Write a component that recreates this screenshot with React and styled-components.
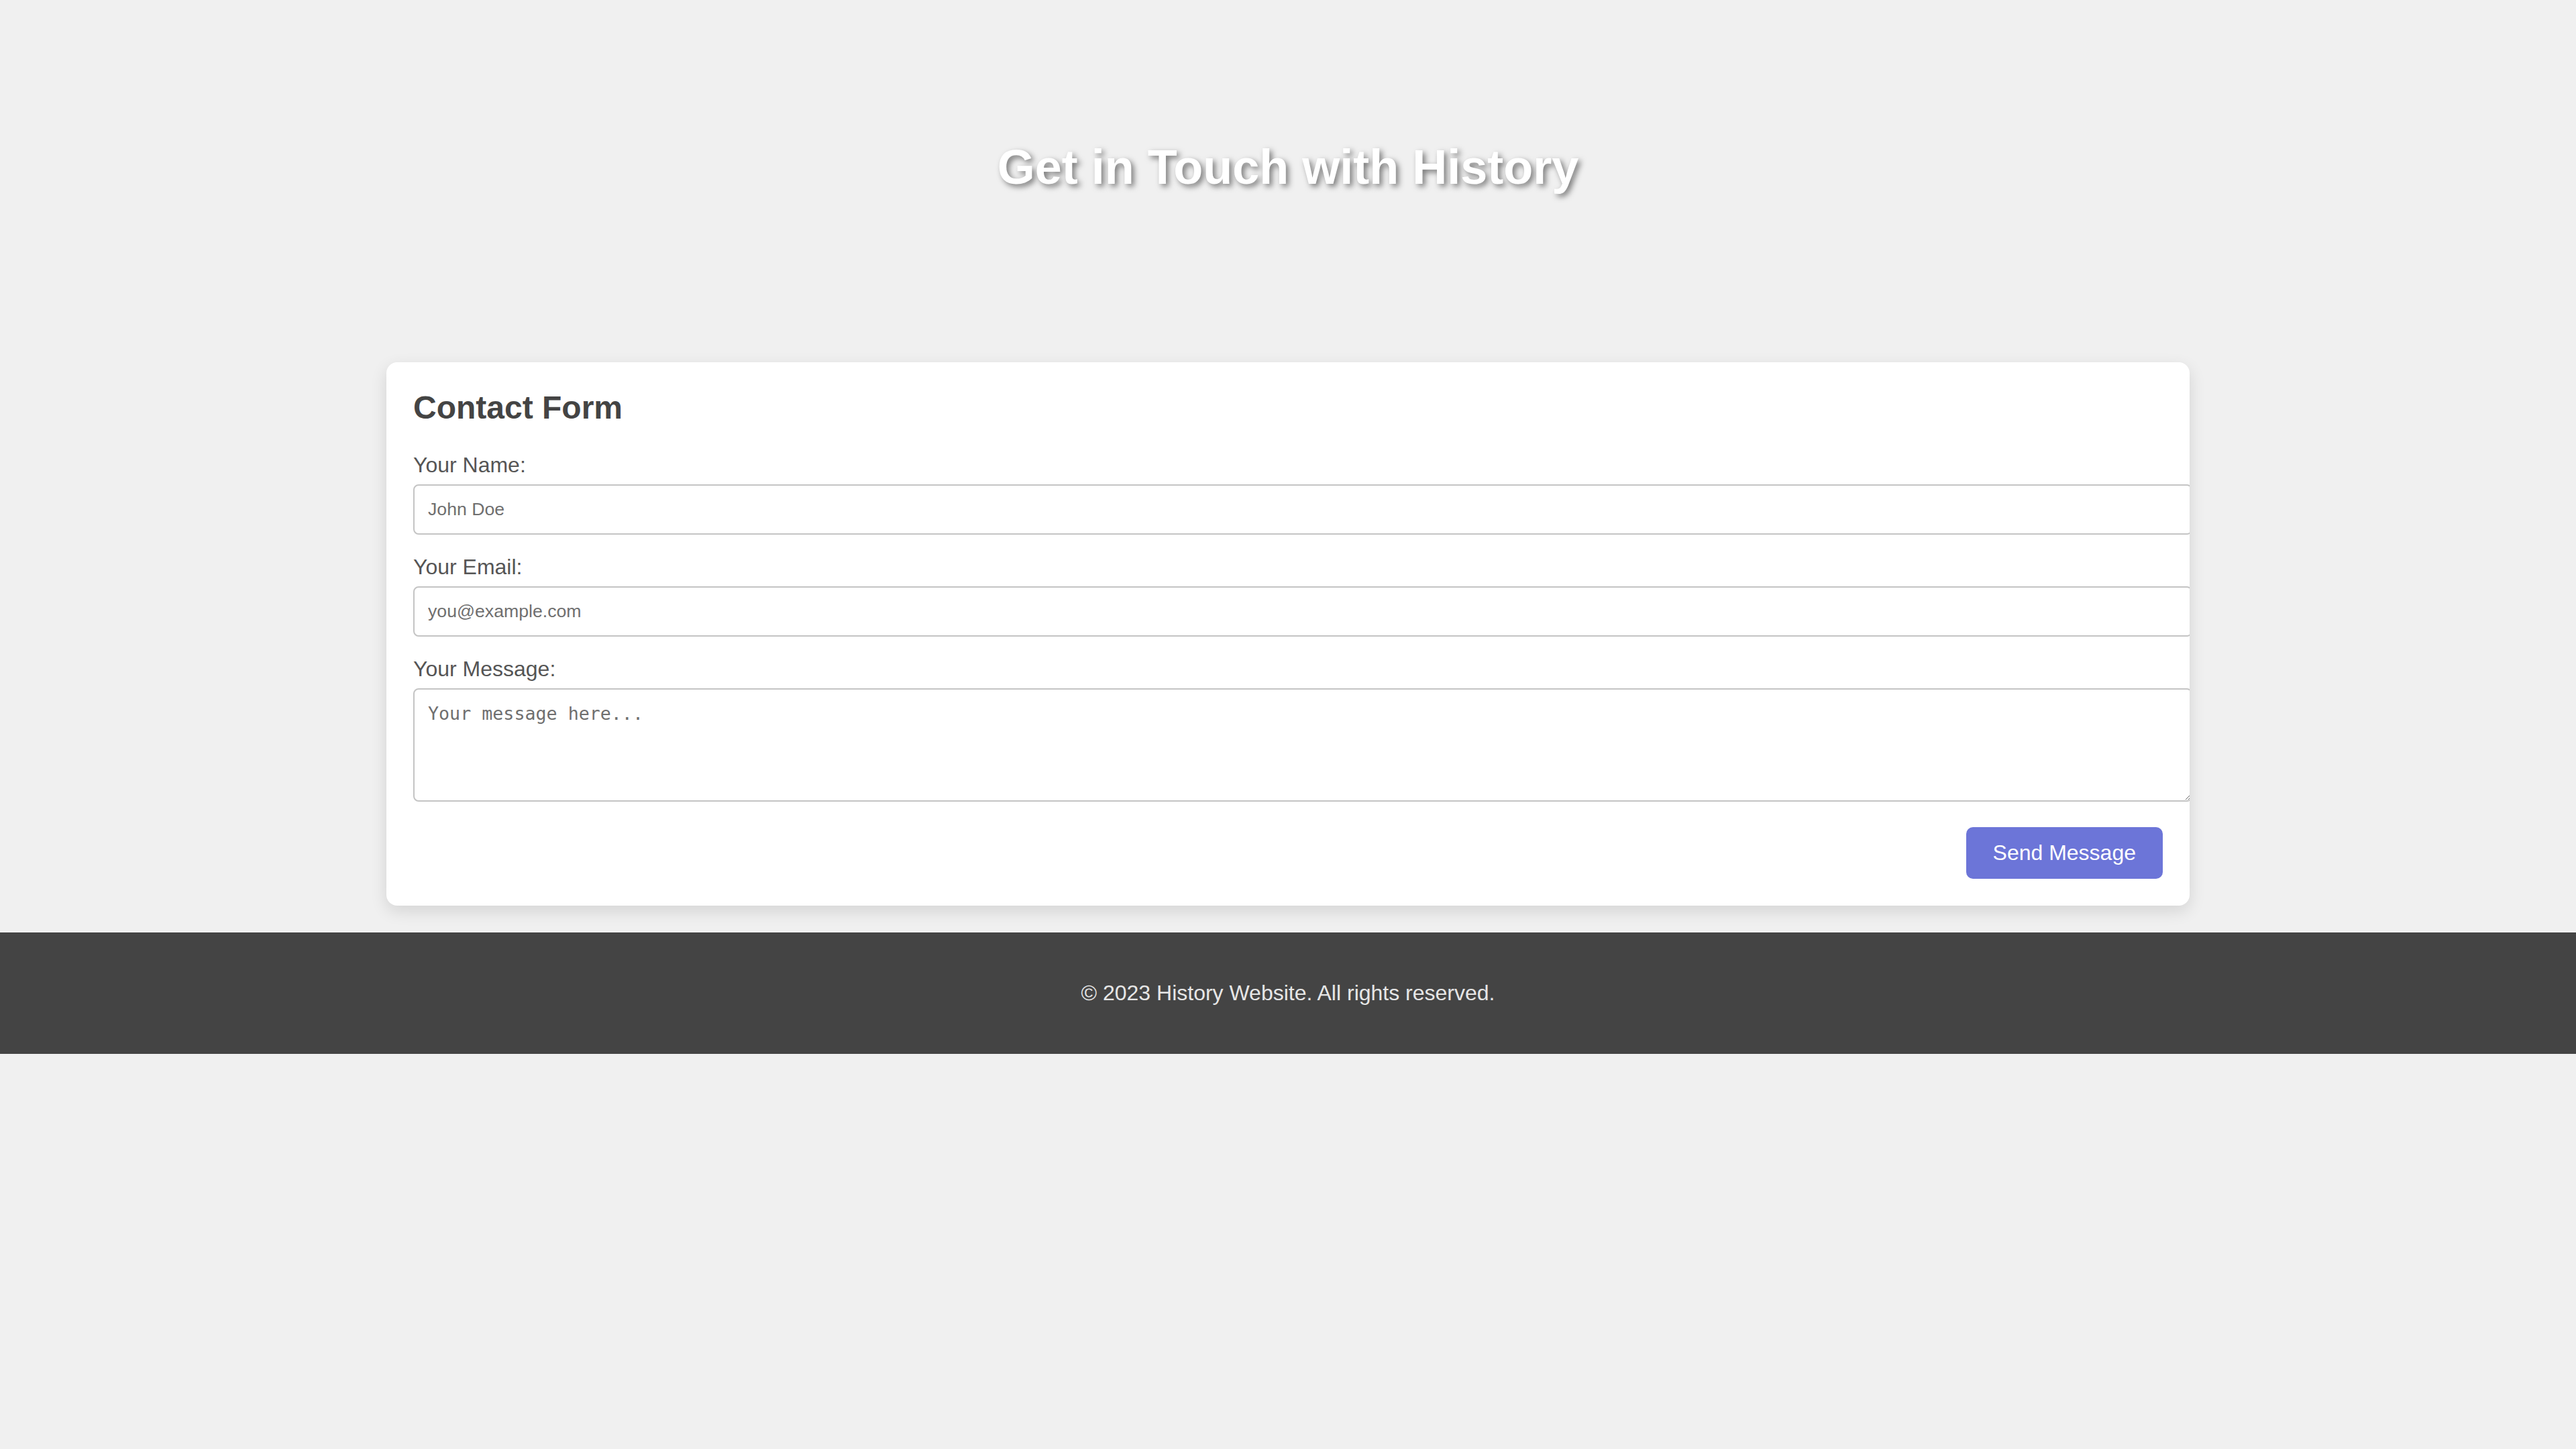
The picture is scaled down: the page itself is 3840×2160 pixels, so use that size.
import React from "react";
import styled, { createGlobalStyle } from "styled-components";

const GlobalStyle = createGlobalStyle`
  body {
    margin: 0;
    background: #f0f0f0;
    font-family: "Liberation Sans", Arial, sans-serif;
    color: #333;
  }
`;

function App() {
  return (
    <>
      <GlobalStyle />
      <Header>
        <Title>Get in Touch with History</Title>
      </Header>

      <Main>
        <Card>
          <CardTitle>Contact Form</CardTitle>
          <form onSubmit={(e) => e.preventDefault()}>
            <FormGroup>
              <Label htmlFor="name">Your Name:</Label>
              <Input id="name" type="text" placeholder="John Doe" />
            </FormGroup>
            <FormGroup>
              <Label htmlFor="email">Your Email:</Label>
              <Input id="email" type="email" placeholder="you@example.com" />
            </FormGroup>
            <FormGroup>
              <Label htmlFor="message">Your Message:</Label>
              <TextArea id="message" placeholder="Your message here..." />
            </FormGroup>
            <Actions>
              <SendButton type="submit">Send Message</SendButton>
            </Actions>
          </form>
        </Card>
      </Main>

      <Footer>
        <FooterText>© 2023 History Website. All rights reserved.</FooterText>
      </Footer>
    </>
  );
}

export default App;

const Header = styled.header`
  padding: 208px 40px 250px;
  text-align: center;
`;

const Title = styled.h1`
  margin: 0;
  font-size: 72px;
  font-weight: 700;
  line-height: 82px;
  color: #ffffff;
  text-shadow: 4px 4px 8px rgba(0, 0, 0, 0.5);
`;

const Main = styled.main`
  margin-bottom: 40px;
`;

const Card = styled.section`
  width: 70%;
  margin: 0 auto;
  padding: 40px;
  box-sizing: border-box;
  background: #ffffff;
  border-radius: 16px;
  box-shadow: 0 8px 24px rgba(0, 0, 0, 0.12);
  overflow: hidden;
`;

const CardTitle = styled.h2`
  margin: 0 0 40px;
  font-size: 48px;
  font-weight: 700;
  line-height: 55px;
  color: #444;
`;

const FormGroup = styled.div`
  margin-bottom: 30px;
`;

const Label = styled.label`
  display: block;
  margin-bottom: 10px;
  font-size: 32px;
  line-height: 37px;
  color: #555;
`;

const Input = styled.input`
  display: block;
  width: 100%;
  padding: 20px;
  border: 2px solid #c4c4c4;
  border-radius: 8px;
  font-family: "Liberation Sans", Arial, sans-serif;
  font-size: 26.67px;
  line-height: 31px;
  color: #333;
  outline: none;

  &::placeholder {
    color: #6f6f6f;
  }
`;

const TextArea = styled.textarea`
  display: block;
  width: 100%;
  height: 125px;
  padding: 20px;
  border: 2px solid #c4c4c4;
  border-radius: 8px;
  font-family: "DejaVu Sans Mono", "Liberation Mono", monospace;
  font-size: 26.67px;
  line-height: 31px;
  color: #333;
  outline: none;

  &::placeholder {
    color: #6f6f6f;
  }
`;

/* margin collapses with the last group's 30px, so this sets the full gap */
const Actions = styled.div`
  display: flex;
  justify-content: flex-end;
  margin-top: 38px;
`;

const SendButton = styled.button`
  padding: 20px 40px;
  border: none;
  border-radius: 10px;
  background: #6c75d8;
  color: #ffffff;
  font-family: "Liberation Sans", Arial, sans-serif;
  font-size: 32px;
  line-height: 37px;
  cursor: pointer;
`;

const Footer = styled.footer`
  padding: 40px;
  background: #444444;
  text-align: center;
`;

const FooterText = styled.p`
  margin: 32px 0;
  font-size: 32px;
  line-height: 37px;
  color: #e6e6e6;
`;
